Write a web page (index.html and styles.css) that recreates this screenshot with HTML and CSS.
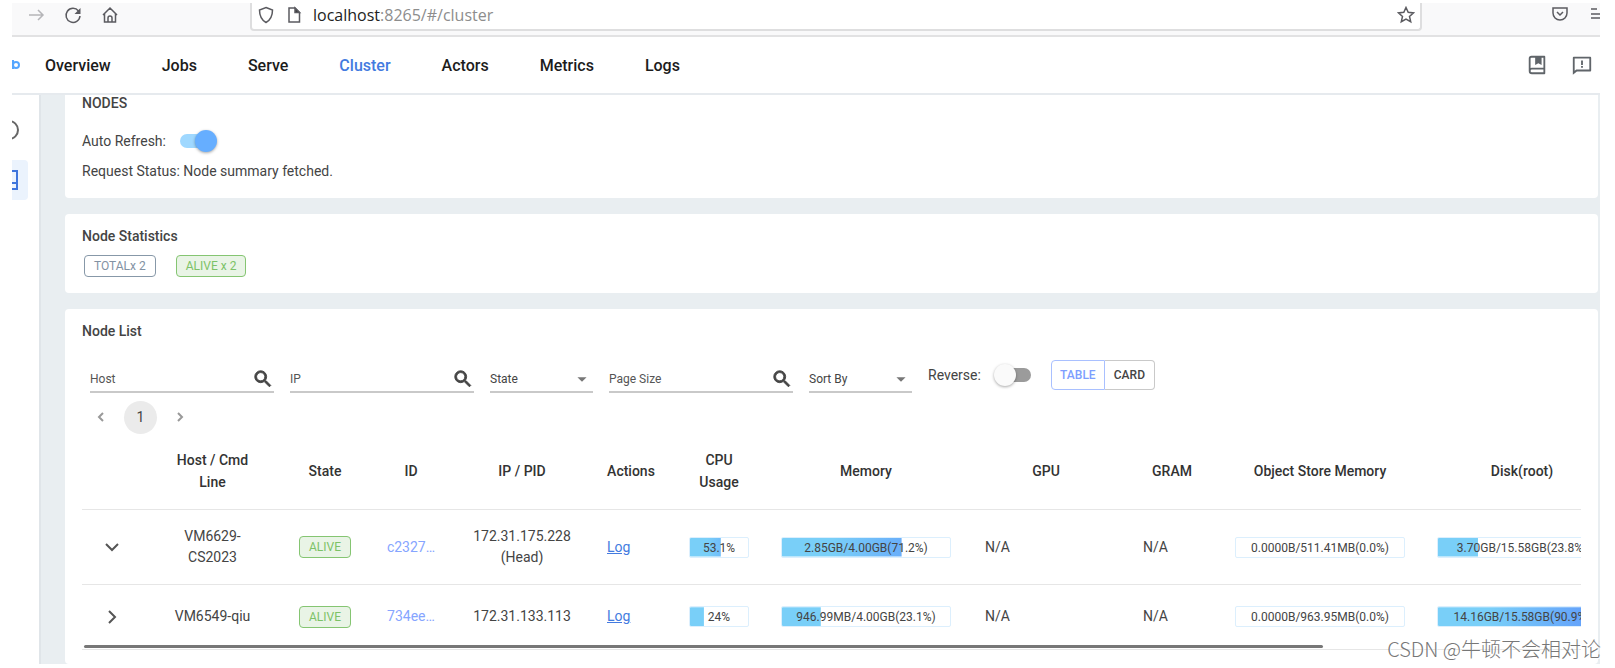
FILE: index.html
```html
<!DOCTYPE html>
<html lang="en">

<head>
  <meta charset="utf-8">
  <meta name="viewport" content="width=device-width, initial-scale=1">
  <link rel="stylesheet" href="styles.css">
  <title>Ray Dashboard</title>
</head>

<body>
  <!-- Browser toolbar -->
  <div class="browser">
    <div class="browser_nav">
      <button class="icon_btn faded" aria-label="Forward"><svg width="18" height="18" viewBox="0 0 18 18"><path d="M2 9h14M11 4l5 5-5 5" /></svg></button>
      <button class="icon_btn" aria-label="Reload"><svg width="18" height="18" viewBox="0 0 18 18"><path d="M14.500 5A7 7 0 1 0 16 10" /><path d="M16.500 2v6h-6z" fill="#5b5b60" stroke="none" /></svg></button>
      <button class="icon_btn" aria-label="Home"><svg width="18" height="18" viewBox="0 0 18 18"><path d="M2 9l7-7 7 7M3.500 8v8h11V8M7 16v-4a2 2 0 0 1 4 0v4" /></svg></button>
    </div>
    <div class="urlbar">
      <svg width="18" height="18" viewBox="0 0 18 18"><path d="M9 1.500l6.500 2.500c0 6-2 10-6.500 12.500C4.500 14 2.500 10 2.500 4z" /></svg>
      <svg width="18" height="18" viewBox="0 0 18 18"><path d="M4 2h6l4.500 4.500V16H4z" /><path d="M10 2v4.500h4.500z" fill="#333" /></svg>
      <span class="url"><b>localhost</b>:8265/#/cluster</span>
      <svg class="star" width="18" height="18" viewBox="0 0 18 18"><path d="M9 1.500l2.200 4.800 5.300.600-4 3.500 1.200 5.300L9 13l-4.700 2.700 1.200-5.300-4-3.500 5.300-.600z" /></svg>
    </div>
    <div class="browser_end">
      <svg width="18" height="18" viewBox="0 0 18 18"><path d="M2 3h14v5a7 7 0 0 1-14 0zM6 7l3 3 3-3" /></svg>
      <svg width="9" height="18" viewBox="0 0 9 18"><path d="M0 4h6M0 9h9M0 13h9" /></svg>
    </div>
  </div>

  <!-- Top navigation -->
  <header class="header">
    <svg class="logo" width="9" height="12" viewBox="0 0 9 12"><path d="M1 1v9" /><circle cx="4" cy="6" r="3" /></svg>
    <nav class="nav">
      <a href="#/overview">Overview</a>
      <a href="#/jobs">Jobs</a>
      <a href="#/serve">Serve</a>
      <a href="#/cluster" class="active">Cluster</a>
      <a href="#/actors">Actors</a>
      <a href="#/metrics">Metrics</a>
      <a href="#/logs">Logs</a>
    </nav>
    <div class="header_links">
      <a href="#docs" aria-label="Docs"><svg width="22" height="22" viewBox="0 0 24 24"><path d="M3 18.500V5a3 3 0 0 1 3-3h14a1 1 0 0 1 1 1v18a1 1 0 0 1-1 1H6.500A3.500 3.500 0 0 1 3 18.500zM19 20v-3H6.500a1.500 1.500 0 0 0 0 3H19zM10 4H6a1 1 0 0 0-1 1v10.337A3.486 3.486 0 0 1 6.500 15H19V4h-2v8l-3.500-2-3.500 2V4z" /></svg></a>
      <a href="#feedback" aria-label="Feedback"><svg width="22" height="22" viewBox="0 0 24 24"><path d="M6.455 19L2 22.500V4a1 1 0 0 1 1-1h18a1 1 0 0 1 1 1v14a1 1 0 0 1-1 1H6.455zm-.692-2H20V5H4v13.385L5.763 17zM11 13h2v2h-2v-2zm0-6h2v5h-2V7z" /></svg></a>
    </div>
  </header>

  <div class="main">
    <!-- Side nav -->
    <nav class="side">
      <a href="#/cluster/info" aria-label="Info"><svg width="8" height="22" viewBox="0 0 8 22"><circle cx="-3" cy="11" r="9" /></svg></a>
      <a href="#/cluster" class="selected" aria-label="Nodes"><svg width="8" height="22" viewBox="0 0 8 22"><path d="M0 2h5v18H0M0 14h5" /></svg></a>
    </nav>

    <div class="content">
      <section class="card summary">
        <h2>NODES</h2>
        <label class="refresh">Auto Refresh: <input type="checkbox" class="switch" checked></label>
        <p>Request Status: Node summary fetched.</p>
      </section>

      <section class="card stats">
        <h2>Node Statistics</h2>
        <div class="chips">
          <span class="chip">TOTALx 2</span>
          <span class="chip alive">ALIVE x 2</span>
        </div>
      </section>

      <section class="card list">
        <h2>Node List</h2>
        <div class="filters">
          <div class="field">
            <input type="text" placeholder="Host" aria-label="Host">
            <svg width="22" height="22" viewBox="0 0 24 24"><use href="#search" /></svg>
          </div>
          <div class="field">
            <input type="text" placeholder="IP" aria-label="IP">
            <svg width="22" height="22" viewBox="0 0 24 24"><use href="#search" /></svg>
          </div>
          <div class="field short">
            <select aria-label="State"><option>State</option></select>
            <svg width="22" height="22" viewBox="0 0 24 24"><use href="#caret" /></svg>
          </div>
          <div class="field">
            <input type="text" placeholder="Page Size" aria-label="Page Size">
            <svg width="22" height="22" viewBox="0 0 24 24"><use href="#search" /></svg>
          </div>
          <div class="field short">
            <select aria-label="Sort By"><option>Sort By</option></select>
            <svg width="22" height="22" viewBox="0 0 24 24"><use href="#caret" /></svg>
          </div>
          <label class="reverse">Reverse: <input type="checkbox" class="switch"></label>
          <div class="toggle">
            <button class="on">TABLE</button><button>CARD</button>
          </div>
        </div>

        <div class="pages">
          <button aria-label="Previous page"><svg width="18" height="18" viewBox="0 0 18 18"><path d="M11 5L7 9l4 4" /></svg></button>
          <button class="current">1</button>
          <button aria-label="Next page"><svg width="18" height="18" viewBox="0 0 18 18"><path d="M7 5l4 4-4 4" /></svg></button>
        </div>

        <div class="table_wrap">
          <table>
            <colgroup>
              <col class="c_expand"><col class="c_host"><col class="c_state"><col class="c_id"><col class="c_ip"><col class="c_actions">
              <col class="c_cpu"><col class="c_bar"><col class="c_gpu"><col class="c_gram"><col class="c_bar"><col class="c_bar">
            </colgroup>
            <thead>
              <tr>
                <th></th>
                <th class="host">Host / Cmd Line</th>
                <th>State</th>
                <th>ID</th>
                <th>IP / PID</th>
                <th>Actions</th>
                <th>CPU Usage</th>
                <th>Memory</th>
                <th>GPU</th>
                <th>GRAM</th>
                <th>Object Store Memory</th>
                <th>Disk(root)</th>
              </tr>
            </thead>
            <tbody>
              <tr>
                <td><button class="expand" aria-label="Collapse"><svg width="22" height="22" viewBox="0 0 22 22"><path d="M5 8l6 6 6-6" /></svg></button></td>
                <td class="host">VM6629-CS2023</td>
                <td><span class="chip alive">ALIVE</span></td>
                <td><a class="id" href="#/cluster/nodes/c2327">c2327…</a></td>
                <td>172.31.175.228 (Head)</td>
                <td class="left"><a class="log" href="#/logs/c2327">Log</a></td>
                <td><div class="bar"><div class="fill" style="--used: 53.1%"></div><span>53.1%</span></div></td>
                <td><div class="bar"><div class="fill" style="--used: 71.2%"></div><span>2.85GB/4.00GB(71.2%)</span></div></td>
                <td class="left">N/A</td>
                <td class="left">N/A</td>
                <td><div class="bar"><span>0.0000B/511.41MB(0.0%)</span></div></td>
                <td><div class="bar"><div class="fill" style="--used: 23.8%"></div><span>3.70GB/15.58GB(23.8%)</span></div></td>
              </tr>
              <tr>
                <td><button class="expand" aria-label="Expand"><svg width="22" height="22" viewBox="0 0 22 22"><path d="M8 5l6 6-6 6" /></svg></button></td>
                <td class="host">VM6549-qiu</td>
                <td><span class="chip alive">ALIVE</span></td>
                <td><a class="id" href="#/cluster/nodes/734ee">734ee…</a></td>
                <td>172.31.133.113</td>
                <td class="left"><a class="log" href="#/logs/734ee">Log</a></td>
                <td><div class="bar"><div class="fill" style="--used: 24%"></div><span>24%</span></div></td>
                <td><div class="bar"><div class="fill" style="--used: 23.1%"></div><span>946.99MB/4.00GB(23.1%)</span></div></td>
                <td class="left">N/A</td>
                <td class="left">N/A</td>
                <td><div class="bar"><span>0.0000B/963.95MB(0.0%)</span></div></td>
                <td><div class="bar"><div class="fill" style="--used: 90.9%"></div><span>14.16GB/15.58GB(90.9%)</span></div></td>
              </tr>
            </tbody>
          </table>
          <div class="scroll_thumb"></div>
        </div>
      </section>
    </div>
  </div>

  <div class="watermark">CSDN @牛顿不会相对论</div>

  <!-- Shared icons -->
  <svg class="defs" width="0" height="0">
    <defs>
      <path id="search" d="M15.500 14h-.790l-.280-.270A6.471 6.471 0 0 0 16 9.500 6.500 6.500 0 1 0 9.500 16c1.610 0 3.090-.590 4.230-1.570l.270.280v.790l5 4.990L20.490 19l-4.990-5zm-6 0C7.010 14 5 11.990 5 9.500S7.010 5 9.500 5 14 7.010 14 9.500 11.990 14 9.500 14z" />
      <path id="caret" d="M7 10l5 5 5-5z" />
    </defs>
  </svg>
</body>

</html>
```
FILE: styles.css
```css
* {
  box-sizing: border-box;
}

body {
  display: flex;
  flex-direction: column;
  height: 100vh;
  margin: 0;
  padding: 3px 15px 4px 12px;
  overflow: hidden;
  background: #fff;
  color: #444;
  font-family: Roboto, "Liberation Sans", sans-serif;
  font-size: 14px;
  line-height: 21px;
}

a {
  text-decoration: none;
}

button,
input,
select {
  margin: 0;
  padding: 0;
  border: none;
  background: none;
  color: inherit;
  font: inherit;
}

button {
  cursor: pointer;
}

svg {
  display: block;
  flex: none;
}

.defs {
  position: absolute;
}

/* Browser toolbar */
.browser {
  display: flex;
  flex: none;
  height: 34px;
  border-bottom: 2px solid #e2e2e3;
  background: #f9f9fa;
}

.browser svg {
  fill: none;
  stroke: #5b5b60;
  stroke-width: 1.5;
}

.browser_nav {
  display: flex;
  gap: 19px;
  width: 238px;
  padding: 3px 0 0 15px;
}

.icon_btn {
  height: 18px;
}

.browser .faded svg {
  stroke: #b5b5b8;
}

.urlbar {
  display: flex;
  flex: 1;
  gap: 10px;
  height: 28px;
  padding: 3px 5px;
  border: 2px solid #dededf;
  border-top: none;
  border-radius: 0 0 4px 4px;
  background: #fff;
}

.url {
  color: #8d8d8d;
  font-family: "Open Sans", "Noto Sans", sans-serif;
  font-size: 16px;
  line-height: 18px;
}

.url b {
  color: #222;
  font-weight: 400;
}

.star {
  margin-left: auto;
}

.browser_end {
  display: flex;
  gap: 22px;
  padding: 2px 0 0 129px;
}

/* Header */
.header {
  display: flex;
  flex: none;
  align-items: center;
  height: 58px;
  border-bottom: 2px solid #e6eaee;
}

.logo {
  fill: none;
  stroke: #55a6ff;
  stroke-width: 2;
}

.nav {
  display: flex;
  gap: 51px;
  margin-left: 24px;
  font-size: 16px;
  font-weight: 500;
}

.nav a {
  color: #1c1c1c;
}

.nav .active {
  color: #437be0;
}

.header_links {
  display: flex;
  gap: 23px;
  margin-left: auto;
  padding-right: 7px;
}

.header_links svg {
  fill: #60656a;
}

/* Page body */
.main {
  display: flex;
  flex: 1;
  min-height: 0;
}

.side {
  flex: none;
  width: 29px;
  padding-top: 15px;
  border-right: 2px solid #e0e5e9;
}

.side a {
  display: flex;
  align-items: center;
  width: 16px;
  height: 40px;
  margin-bottom: 10px;
  border-radius: 0 4px 4px 0;
}

.side svg {
  fill: none;
  stroke: #666;
  stroke-width: 2;
}

.side .selected {
  background: #ebf3fd;
}

.side .selected svg {
  stroke: #3f75dc;
}

.content {
  display: flex;
  flex: 1;
  flex-direction: column;
  gap: 16px;
  min-width: 0;
  padding: 0 2px 0 24px;
  overflow: hidden;
  background: #e9eef1;
}

.card {
  flex: none;
  padding: 12px 17px;
  border-radius: 4px;
  background: #fff;
}

.card h2 {
  margin: 0;
  font-size: 14px;
  font-weight: 500;
}

.summary {
  height: 103px;
  padding-top: 0;
  border-radius: 0 0 4px 4px;
}

.summary h2 {
  line-height: 16px;
}

.refresh,
.reverse {
  display: flex;
  gap: 13px;
  align-items: center;
}

.refresh {
  height: 24px;
  margin-top: 18px;
}

.summary p {
  margin: 8px 0 0;
}

/* Material style switch */
.switch {
  position: relative;
  width: 38px;
  height: 22px;
  appearance: none;
}

.switch::before {
  content: "";
  position: absolute;
  inset: 4px 1px;
  border-radius: 7px;
  background: #9b9b9b;
}

.switch::after {
  content: "";
  position: absolute;
  left: 0;
  width: 22px;
  height: 22px;
  border-radius: 50%;
  background: #fafafa;
  box-shadow: 0 1px 3px rgba(0, 0, 0, .35);
}

.switch:checked::before {
  background: #9fd8ff;
}

.switch:checked::after {
  right: 0;
  left: auto;
  background: #66aeff;
}

/* Chips */
.stats {
  height: 79px;
}

.chips {
  display: flex;
  gap: 20px;
  margin: 8px 2px 0;
}

.chip {
  display: inline-block;
  height: 22px;
  padding: 0 9px;
  border: 1px solid #8798a8;
  border-radius: 4px;
  color: #8292a3;
  font-size: 12px;
  line-height: 20px;
}

.alive {
  border-color: #85c572;
  background: #e9f4e6;
  color: #7cc267;
}

td .chip {
  vertical-align: middle;
}

/* Node list */
.list {
  flex: 1 0 auto;
}

.filters {
  display: flex;
  gap: 16px;
  align-items: flex-end;
  height: 51px;
  margin: 0 8px;
}

.field {
  display: flex;
  align-items: center;
  width: 184px;
  height: 26px;
  border-bottom: 2px solid #c9c9c9;
  font-size: 12px;
}

.field input,
.field select {
  flex: 1;
  min-width: 0;
  appearance: none;
}

.field input::placeholder {
  color: #555;
  opacity: 1;
}

.field svg {
  fill: #444;
  stroke: #444;
}

.field.short {
  width: 103px;
}

.field.short svg {
  fill: #777;
  stroke: none;
}

.reverse {
  height: 24px;
  margin-bottom: 6px;
}

.toggle {
  display: flex;
  height: 30px;
  margin: 0 0 3px 3px;
  font-size: 12px;
  font-weight: 500;
}

.toggle button {
  width: 50px;
  border: 1px solid #c9c9c9;
  border-left: none;
  border-radius: 0 4px 4px 0;
}

.toggle .on {
  width: 54px;
  border: 1px solid #a9c0ff;
  border-radius: 4px 0 0 4px;
  color: #7d9eff;
}

.pages {
  display: flex;
  gap: 14px;
  align-items: center;
  height: 32px;
  margin: 8px 10px 0;
}

.pages button {
  border-radius: 50%;
}

.pages svg {
  fill: none;
  stroke: #999;
  stroke-width: 2;
}

.pages .current {
  width: 33px;
  height: 33px;
  background: #ebebeb;
}

.table_wrap {
  position: relative;
  overflow: hidden;
  border-bottom: 1px solid #e6e6e6;
}

table {
  width: 1541px;
  table-layout: fixed;
  border-collapse: collapse;
  text-align: center;
}

.c_expand { width: 60px; }
.c_host { width: 141px; }
.c_state { width: 84px; }
.c_id { width: 88px; }
.c_ip { width: 134px; }
.c_actions { width: 84px; }
.c_cpu { width: 92px; }
.c_bar { width: 202px; }
.c_gpu { width: 158px; }
.c_gram { width: 94px; }

th,
td {
  padding: 16px;
  border-bottom: 1px solid #e6e6e6;
}

th {
  color: #333;
  font-weight: 500;
  line-height: 22px;
}

.host {
  padding: 16px 28px;
}

tbody tr:last-child td {
  height: 64px;
  border-bottom: none;
}

.left {
  padding-left: 18px;
  text-align: left;
}

.expand {
  margin: 0 3px;
  vertical-align: middle;
}

.expand svg {
  fill: none;
  stroke: #555;
  stroke-width: 2;
}

.id {
  color: #86a5ff;
}

.log {
  color: #437be0;
  text-decoration: underline;
}

.bar {
  position: relative;
  height: 21px;
  overflow: hidden;
  border: 1px solid #dceffd;
  border-radius: 2px;
  font-size: 12px;
  line-height: 20px;
}

/* Label sits over the fill */
.bar span {
  position: relative;
}

/* The gradient spans the whole bar, only the used part shows */
.fill {
  position: absolute;
  inset: 0;
  background: linear-gradient(90deg, #79cff8 30%, #5f98fb);
  clip-path: inset(0 calc(100% - var(--used)) 0 0);
}

.scroll_thumb {
  position: absolute;
  bottom: 1px;
  left: 2px;
  width: calc(100% - 260px);
  height: 3px;
  border-radius: 2px;
  background: #777;
}

.watermark {
  position: absolute;
  right: 14px;
  bottom: 5px;
  color: #777;
  font-family: "Noto Sans CJK SC", sans-serif;
  font-size: 20px;
  font-weight: 300;
  line-height: 28px;
  text-shadow: 1px 1px 0 #fff;
}
```
